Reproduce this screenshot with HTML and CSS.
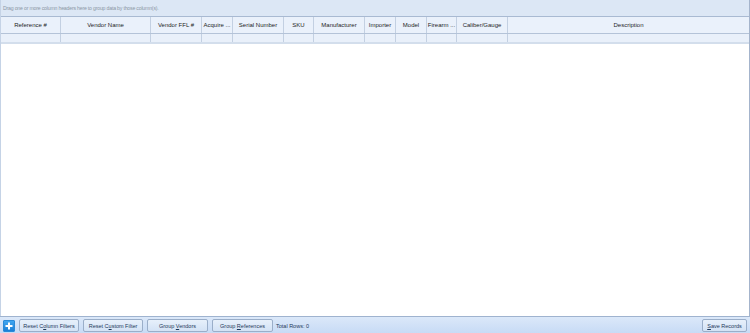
FILE: index.html
```html
<!DOCTYPE html>
<html>
  <head>
    <meta charset="UTF-8">
    <title>Acquisitions</title>
    <link rel="stylesheet" href="styles.css">
  </head>
  <body>
  <div id="grid">
    <!-- group panel -->
    <div class="group-panel">Drag one or more column headers here to group data by those column(s).</div>

    <!-- headers -->
    <div class="row header">
      <div class="col c1">Reference #</div>
      <div class="col c2">Vendor Name</div>
      <div class="col c3">Vendor FFL #</div>
      <div class="col c4">Acquire ...</div>
      <div class="col c5">Serial Number</div>
      <div class="col c6">SKU</div>
      <div class="col c7">Manufacturer</div>
      <div class="col c8">Importer</div>
      <div class="col c9">Model</div>
      <div class="col c10">Firearm ...</div>
      <div class="col c11">Caliber/Gauge</div>
      <div class="col c12">Description</div>
    </div>

    <!-- filter row -->
    <div class="row filter">
      <div class="col c1"></div>
      <div class="col c2"></div>
      <div class="col c3"></div>
      <div class="col c4"></div>
      <div class="col c5"></div>
      <div class="col c6"></div>
      <div class="col c7"></div>
      <div class="col c8"></div>
      <div class="col c9"></div>
      <div class="col c10"></div>
      <div class="col c11"></div>
      <div class="col c12"></div>
    </div>

    <div class="body"></div>
  </div>

  <div id="footer">
    <button class="add" title="Add">
      <svg width="8" height="8" viewBox="0 0 8 8"><path d="M4 0.5v7M0.5 4h7" stroke="#fff" stroke-width="2"/></svg>
    </button>
    <button class="btn w60">Reset C<u>o</u>lumn Filters</button>
    <button class="btn w60">Reset C<u>u</u>stom Filter</button>
    <button class="btn w61">Group <u>V</u>endors</button>
    <button class="btn w61">Group <u>R</u>eferences</button>
    <span class="total">Total Rows: 0</span>
    <button class="btn save"><u>S</u>ave Records</button>
  </div>
  </body>
</html>
```

FILE: styles.css
```css
/* grid + toolbar */
body {
  margin: 0;
  width: 750px;
  height: 333px;
  overflow: hidden;
  font-family: "Liberation Sans", Arial, sans-serif;
  font-size: 6px;
  color: #1e1e1e;
  background: #fff;
}
#grid {
  height: 316px;
  display: flex;
  flex-direction: column;
  border-right: 1px solid #a4b4cc;
  border-left: 1px solid #c5d3e6;
  box-sizing: border-box;
}
.group-panel {
  height: 17px;
  line-height: 17px;
  padding-left: 2px;
  background: #dce7f5;
  color: #8c97a6;
  font-size: 5.2px;
  letter-spacing: -0.2px;
  border-bottom: 1px solid #a9bad2;
  box-sizing: border-box;
}
.row {
  display: flex;
  box-sizing: border-box;
}
.header {
  height: 17px;
  background: #eaf1fb;
  border-bottom: 1px solid #b4c3d8;
}
.filter {
  height: 10px;
  background: #e9f0fa;
  border-bottom: 2px solid #d3deec;
}
.col {
  border-right: 1px solid #c3d0e2;
  box-sizing: border-box;
  text-align: center;
  line-height: 17px;
  white-space: nowrap;
  overflow: hidden;
}
.c1 { width: 60px; }
.c2 { width: 90px; }
.c3 { width: 51px; }
.c4 { width: 31px; }
.c5 { width: 51px; }
.c6 { width: 30px; }
.c7 { width: 51px; }
.c8 { width: 31px; }
.c9 { width: 31px; }
.c10 { width: 30px; }
.c11 { width: 51px; }
.c12 { flex: 1; border-right: none; }
.body {
  flex: 1;
  background: #fff;
}
#footer {
  height: 17px;
  display: flex;
  align-items: center;
  gap: 4px;
  padding: 0 3px 0 3px;
  background: linear-gradient(#dbe8f9, #c6daf5);
  border-top: 1px solid #9fb3cf;
}
button {
  font-family: inherit;
  cursor: pointer;
  white-space: nowrap;
}
.add {
  width: 12px;
  height: 12px;
  padding: 0;
  border: 1px solid #2a8ad8;
  border-radius: 1px;
  background: linear-gradient(#3fa5f0, #1b7fd6);
  display: flex;
  align-items: center;
  justify-content: center;
}
.btn {
  height: 13px;
  padding: 0;
  font-size: 5.5px;
  color: #1e395b;
  background: linear-gradient(#e7f0fb, #d3e2f5);
  border: 1px solid #9aaec9;
  border-radius: 2px;
}
.w60 { width: 60px; }
.w61 { width: 61px; }
.total {
  font-size: 5.5px;
  color: #1e395b;
  margin-left: -1px;
}
.save {
  margin-left: auto;
  width: 45px;
}
```
